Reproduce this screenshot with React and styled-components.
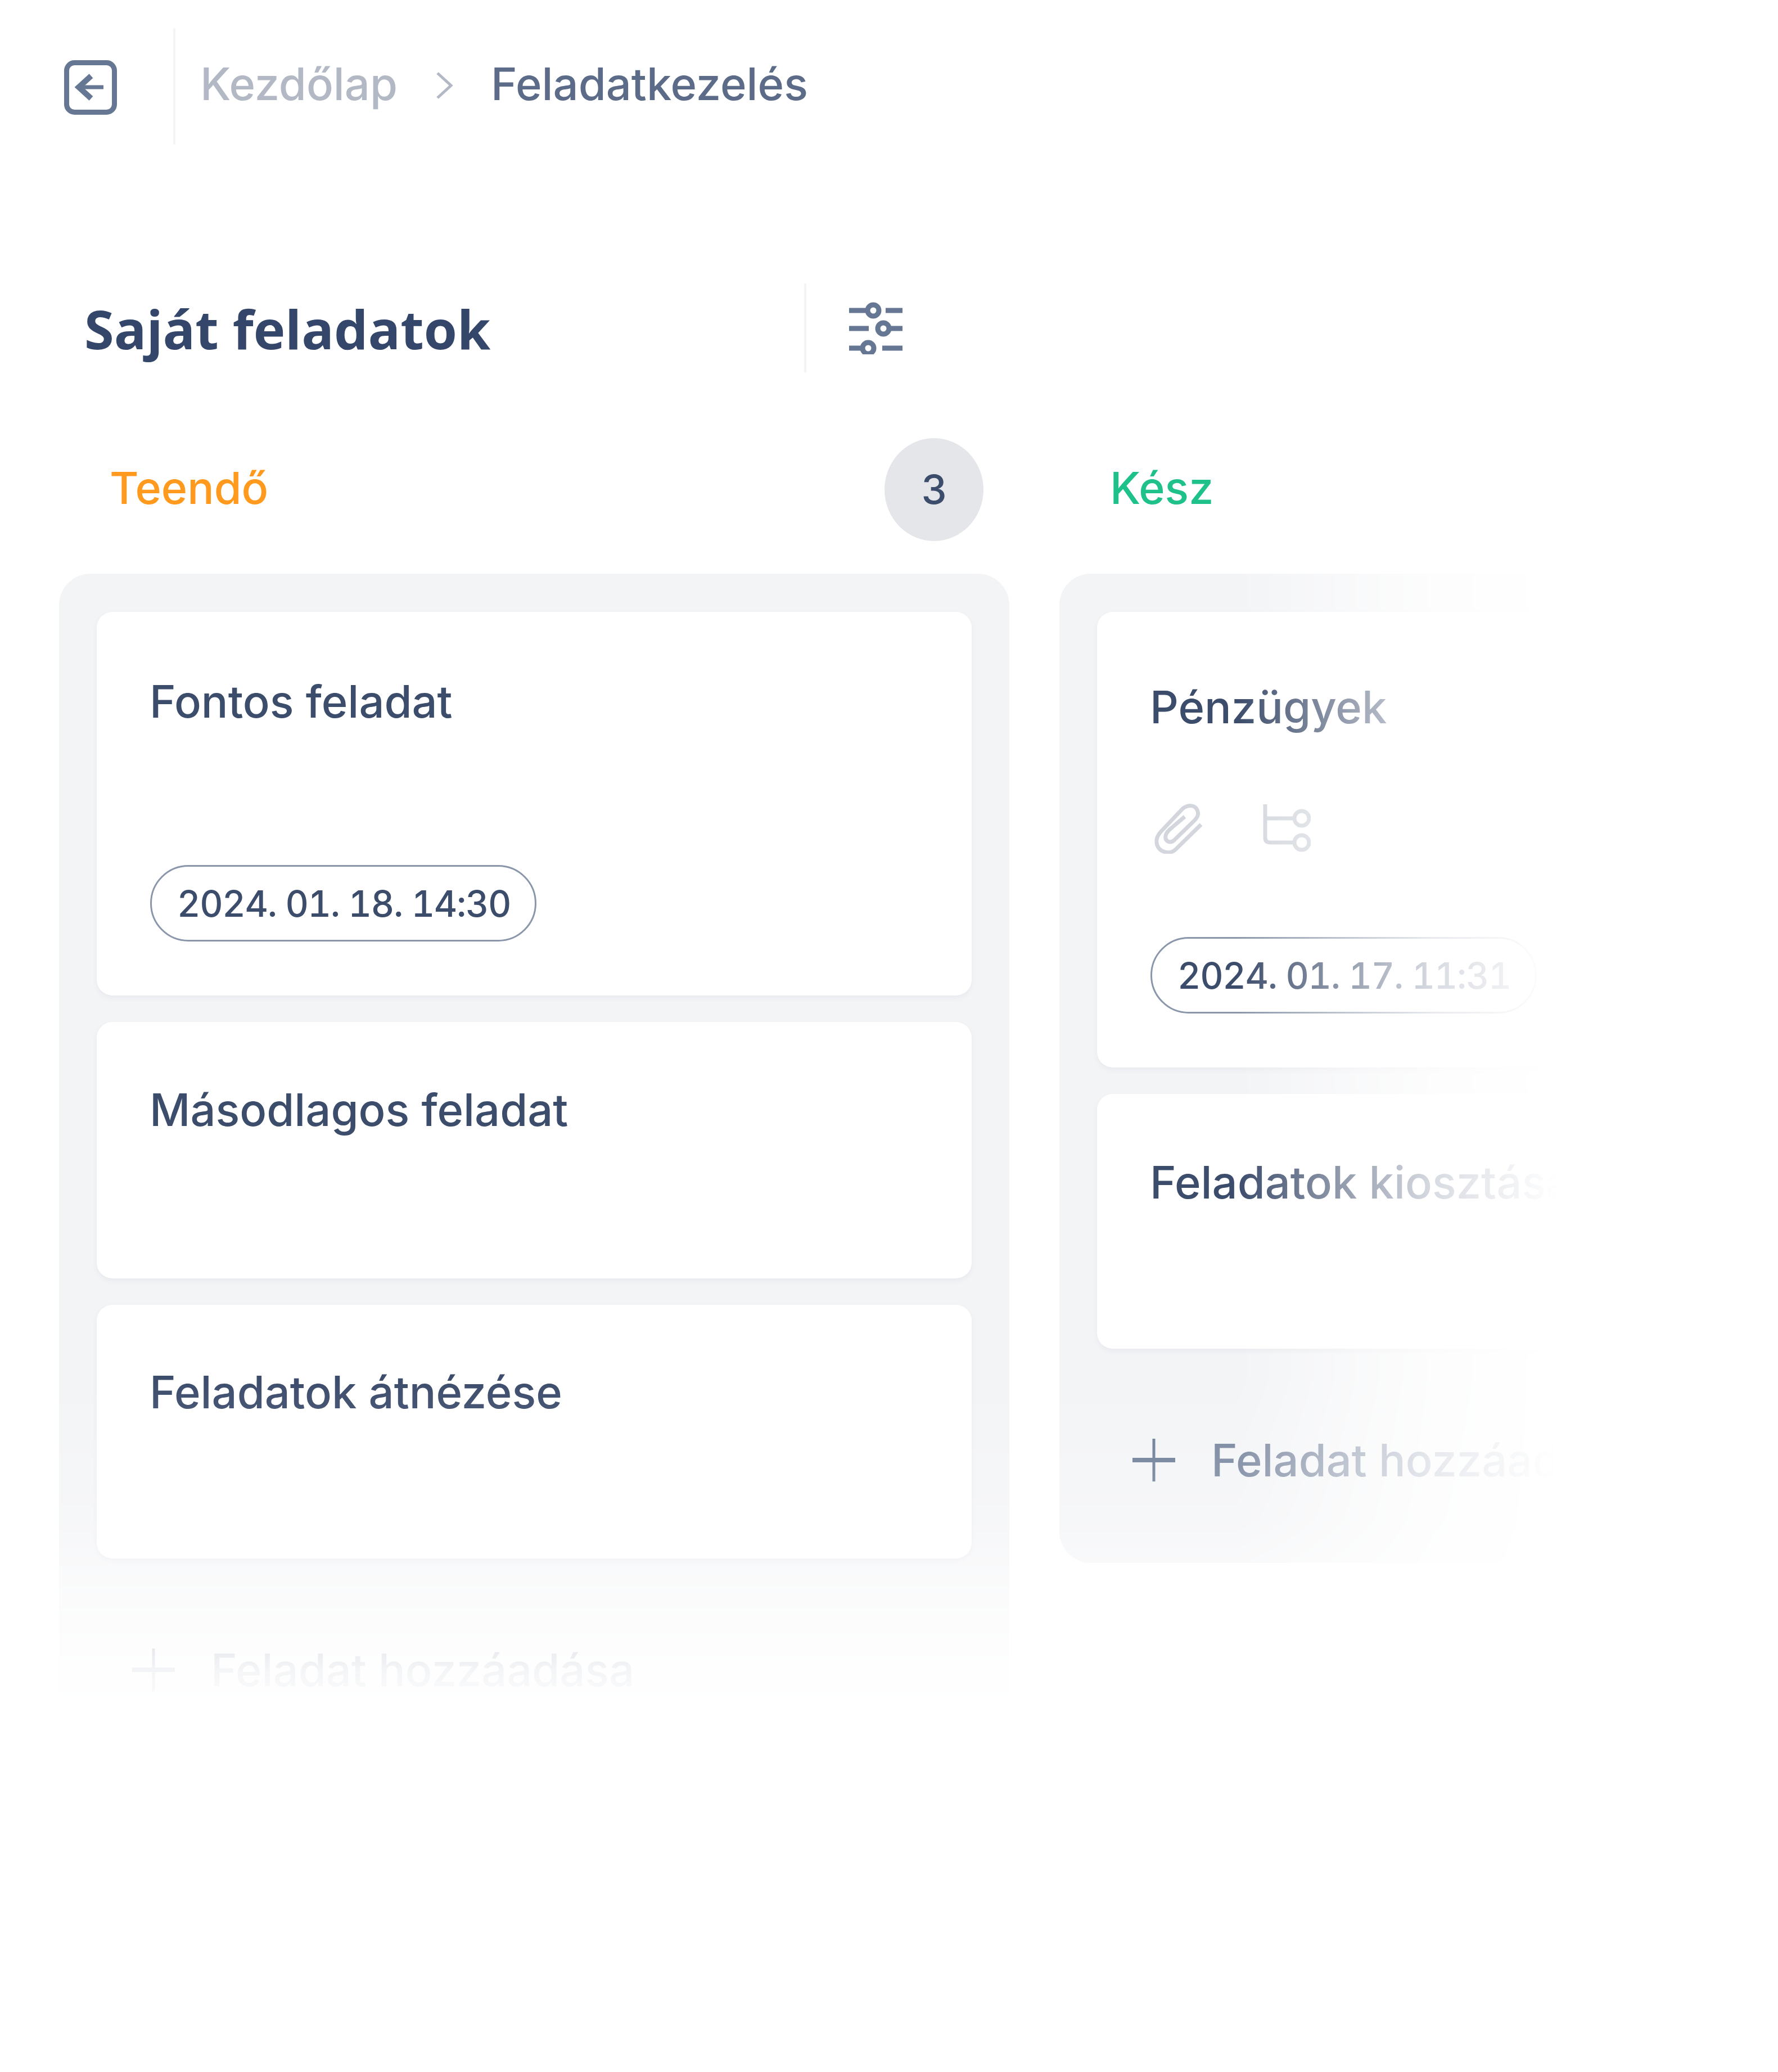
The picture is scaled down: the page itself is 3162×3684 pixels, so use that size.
import styled, { createGlobalStyle } from 'styled-components';

const GlobalStyle = createGlobalStyle`
  html, body {
    margin: 0;
    padding: 0;
    background: #fff;
  }
  * {
    box-sizing: border-box;
  }
`;

// the whole page fades out to the right and to the bottom
const Page = styled.div`
  width: 3162px;
  height: 3684px;
  overflow: hidden;
  font-family: Inter, "Liberation Sans", sans-serif;
  font-weight: 500;
  color: #3c4c6b;
  mask-image: linear-gradient(
      to right,
      #000 2200px,
      rgba(0, 0, 0, 0.5) 2410px,
      rgba(0, 0, 0, 0.2) 2550px,
      rgba(0, 0, 0, 0.06) 2700px,
      transparent 2770px
    ),
    linear-gradient(
      to bottom,
      #000 2450px,
      rgba(0, 0, 0, 0.75) 2700px,
      rgba(0, 0, 0, 0.45) 2800px,
      rgba(0, 0, 0, 0.08) 2970px,
      transparent 3060px
    );
  mask-composite: intersect;
`;

const TopBar = styled.div`
  display: flex;
  align-items: center;
  height: 207px;
  margin-top: 50px;
  padding-left: 114px;
`;

const BackSvg = styled.svg`
  margin-top: 3px;
`;

const Divider = styled.div`
  width: 4px;
  height: 100%;
  border-radius: 2px;
  background: #f3f4f6;
  margin-left: ${({ $left }) => $left}px;
`;

const Crumbs = styled.div`
  display: flex;
  align-items: center;
  margin-left: 44px;
  margin-top: -10px;
  font-size: 79.4px;
  line-height: 94px;
`;

const CrumbMuted = styled.span`
  color: #b3b9c4;
`;

const CrumbActive = styled.span`
  color: #5c6c88;
`;

const Chevron = styled.svg`
  margin: 6px 68px 0 68px;
`;

const HeadingRow = styled.div`
  display: flex;
  align-items: center;
  height: 159px;
  margin-top: 247px;
  padding-left: 150px;
`;

const Heading = styled.h1`
  width: 1280px;
  margin: 0;
  font-family: "Open Sans", sans-serif;
  font-size: 95.6px;
  font-weight: 700;
  line-height: 130px;
  color: #34476a;
`;

const FilterIcon = styled.svg`
  margin: -4px 0 0 76px;
`;

const Board = styled.div`
  display: flex;
  align-items: flex-start;
  gap: 89px;
  margin-top: 116px;
  padding-left: 105px;
`;

const Column = styled.section`
  flex: 0 0 1690px;
`;

const ColumnHeader = styled.div`
  display: flex;
  align-items: center;
  justify-content: space-between;
  height: 183px;
  margin-bottom: 58px;
  padding: 0 46px 0 90px;
`;

const ColumnTitle = styled.h2`
  margin: 0 0 8px;
  font-size: 79px;
  font-weight: 500;
  color: ${({ $color }) => $color};
`;

const Count = styled.div`
  display: flex;
  align-items: center;
  justify-content: center;
  width: 176px;
  height: 183px;
  padding-bottom: 3px;
  border-radius: 50%;
  background: #e4e6ea;
  font-size: 72px;
  color: #3c4c6b;
`;

const Lane = styled.div`
  padding: 68px 67px 0;
  border-radius: 56px;
  background: #f3f4f6;
`;

const Cards = styled.div`
  display: flex;
  flex-direction: column;
  gap: 47px;
`;

const Card = styled.article`
  display: flex;
  flex-direction: column;
  align-items: flex-start;
  height: ${({ $height }) => $height}px;
  padding: 0 94px 96px;
  border-radius: 28px;
  background: #fff;
  box-shadow: 0 4px 10px rgba(60, 76, 107, 0.06);
`;

const CardTitle = styled.h3`
  margin: ${({ $top }) => $top}px 0 0;
  font-size: 79.4px;
  font-weight: 500;
  line-height: 94px;
  color: #3c4c6b;
`;

const CardIcons = styled.div`
  display: flex;
  align-items: center;
  gap: 108px;
  margin: 124px 0 0 8px;
`;

const DatePill = styled.div`
  display: flex;
  align-items: center;
  width: 687px;
  height: 136px;
  margin: auto 0 0 1px;
  padding: 0 0 0 45px;
  border: 3px solid #8a96aa;
  border-radius: 68px;
  font-size: 64px;
  font-variant-numeric: tabular-nums;
  letter-spacing: -1.3px;
  white-space: nowrap;
  color: #3c4c6b;
`;

const AddTask = styled.div`
  display: flex;
  align-items: center;
  gap: 64px;
  height: 381px;
  padding: 14px 0 0 63px;
  font-size: 79.4px;
  white-space: nowrap;
  color: #73819a;
`;

const BackIcon = () => (
  <BackSvg width="94" height="97" viewBox="0 0 94 97" fill="none" stroke="#667793">
    <rect x="4.5" y="4.5" width="85" height="88" rx="14" strokeWidth="9" />
    <path d="M48 28 L26 48 L48 68" strokeWidth="10" />
    <path d="M28 48 H70" strokeWidth="7" />
  </BackSvg>
);

const Filter = () => (
  <FilterIcon width="96" height="96" viewBox="0 0 96 96" fill="none" stroke="#667793" strokeWidth="9">
    <path d="M0 18 H33 M65 18 H95" />
    <circle cx="43" cy="18" r="10" />
    <path d="M0 50 H35 M71 50 H95" />
    <circle cx="61" cy="50" r="10" />
    <path d="M0 85 H24 M59 85 H95" />
    <circle cx="34" cy="85" r="10" />
  </FilterIcon>
);

const ClipIcon = () => (
  <svg width="85" height="90" viewBox="0 0 85 90" fill="none" stroke="#d3d7dd" strokeWidth="7">
    <path d="M83 38 L38 82 C28 92 10 88 5 75 C2 65 5 58 12 50 L50 10 C60 2 72 3 76 12 C80 20 76 26 70 32 L35 66 C28 72 18 68 20 58 C20 54 24 50 28 46 L54 24" />
  </svg>
);

const BranchIcon = () => (
  <svg width="85" height="86" viewBox="0 0 85 86" fill="none" stroke="#d3d7dd" strokeWidth="7">
    <path d="M4 0 V60 C4 66 8 68 14 68 H56 M4 25 H56" />
    <circle cx="69" cy="25" r="13" />
    <circle cx="69" cy="68" r="13" />
  </svg>
);

const PlusIcon = () => (
  <svg width="76" height="76" viewBox="0 0 76 76" fill="none" stroke="#667793">
    <path d="M0 38 H76" strokeWidth="8" />
    <path d="M38 0 V76" strokeWidth="5" />
  </svg>
);

const App = () => {
  return (
    <Page>
      <GlobalStyle />
      <TopBar>
        <BackIcon />
        <Divider $left={100} />
        <Crumbs>
          <CrumbMuted>Kezdőlap</CrumbMuted>
          <Chevron width="30" height="50" viewBox="0 0 30 50" fill="none" stroke="#b3b9c4" strokeWidth="5">
            <path d="M3 3 L27 25 L3 47" />
          </Chevron>
          <CrumbActive>Feladatkezelés</CrumbActive>
        </Crumbs>
      </TopBar>

      <HeadingRow>
        <Heading>Saját feladatok</Heading>
        <Divider $left={0} />
        <Filter />
      </HeadingRow>

      <Board>
        <Column>
          <ColumnHeader>
            <ColumnTitle $color="#ff9a1f">Teendő</ColumnTitle>
            <Count>3</Count>
          </ColumnHeader>
          <Lane>
            <Cards>
              <Card $height={682}>
                <CardTitle $top={112}>Fontos feladat</CardTitle>
                <DatePill>2024. 01. 18. 14:30</DatePill>
              </Card>
              <Card $height={456}>
                <CardTitle $top={109}>Másodlagos feladat</CardTitle>
              </Card>
              <Card $height={451}>
                <CardTitle $top={108}>Feladatok átnézése</CardTitle>
              </Card>
            </Cards>
            <AddTask>
              <PlusIcon />
              Feladat hozzáadása
            </AddTask>
          </Lane>
        </Column>

        <Column>
          <ColumnHeader>
            <ColumnTitle $color="#1fc18a">Kész</ColumnTitle>
          </ColumnHeader>
          <Lane>
            <Cards>
              <Card $height={810}>
                <CardTitle $top={122}>Pénzügyek</CardTitle>
                <CardIcons>
                  <ClipIcon />
                  <BranchIcon />
                </CardIcons>
                <DatePill>2024. 01. 17. 11:31</DatePill>
              </Card>
              <Card $height={453}>
                <CardTitle $top={110}>Feladatok kiosztása</CardTitle>
              </Card>
            </Cards>
            <AddTask>
              <PlusIcon />
              Feladat hozzáadása
            </AddTask>
          </Lane>
        </Column>
      </Board>
    </Page>
  );
};

export default App;
